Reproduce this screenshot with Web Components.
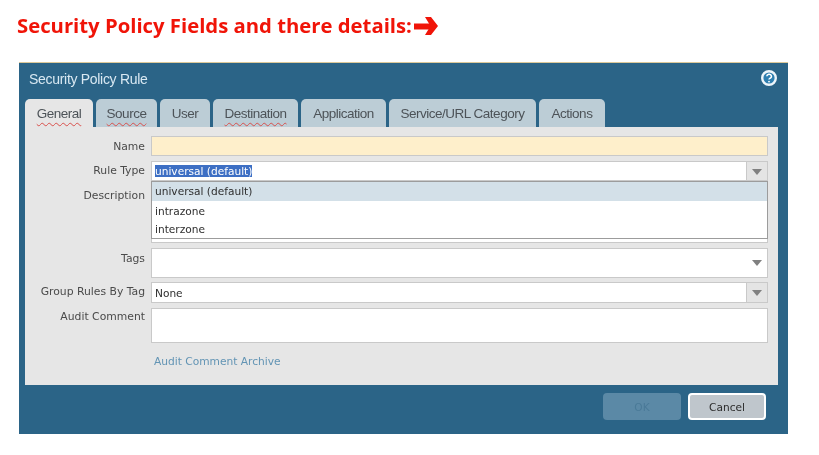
<!DOCTYPE html>
<html>
<head>
<meta charset="utf-8">
<title>Security Policy Rule</title>
<style>
    html, body { margin: 0; padding: 0; background: #fff; }
    body { width: 819px; height: 455px; overflow: hidden; }
</style>
</head>
<body>
<policy-page>
    <policy-heading>Security Policy Fields and there details:</policy-heading>
    <policy-dialog heading="Security Policy Rule">
        <policy-tabs slot="tabs">
            <policy-tab w="68" active spell>General</policy-tab>
            <policy-tab w="61" spell>Source</policy-tab>
            <policy-tab w="50">User</policy-tab>
            <policy-tab w="85" spell>Destination</policy-tab>
            <policy-tab w="85">Application</policy-tab>
            <policy-tab w="147">Service/URL Category</policy-tab>
            <policy-tab w="66">Actions</policy-tab>
        </policy-tabs>
        <form-row label="Name" h="20" nudge="1"><text-box tint h="20"></text-box></form-row>
        <form-row label="Rule Type" h="20">
            <text-box h="20" arrow="button"><span style="background:#3d6fc4;color:#fff">universal (default)</span></text-box>
            <option-menu>
                <option-item selected>universal (default)</option-item>
                <option-item lower>intrazone</option-item>
                <option-item>interzone</option-item>
            </option-menu>
        </form-row>
        <form-row label="Description" h="58" nudge="1"><text-box h="58"></text-box></form-row>
        <form-row label="Tags" h="30" nudge="1"><text-box h="30" arrow="plain"></text-box></form-row>
        <form-row label="Group Rules By Tag" h="21"><text-box h="21" arrow="button" lower>None</text-box></form-row>
        <form-row label="Audit Comment" h="35" nudge="-1"><text-box h="35"></text-box></form-row>
        <form-row label="" h="13"><policy-link>Audit Comment Archive</policy-link></form-row>
        <policy-button slot="footer" disabled>OK</policy-button>
        <policy-button slot="footer" focused>Cancel</policy-button>
    </policy-dialog>
</policy-page>

<script>
class PolicyPage extends HTMLElement {
    constructor() {
        super();
        this.attachShadow({ mode: 'open' });
    }
    connectedCallback() {
        this.shadowRoot.innerHTML = `
            <style>
                :host { display: block; width: 819px; height: 455px; box-sizing: border-box; padding: 12px 31px 0 19px; }
            </style>
            <slot></slot>
        `;
    }
}

class PolicyHeading extends HTMLElement {
    constructor() {
        super();
        this.attachShadow({ mode: 'open' });
    }
    connectedCallback() {
        this.shadowRoot.innerHTML = `
            <style>
                :host { display: flex; align-items: center; height: 26px; margin: 0 0 24px -2px; color: #f01408;
                    font: bold 20.300px "Open Sans", sans-serif; white-space: nowrap; filter: blur(.3px); }
                svg { margin: 1px 0 0 2px; flex: none; }
            </style>
            <slot></slot>
            <svg width="24" height="18" viewBox="0 0 24 18">
                <path d="M0 6.500H18V12.500H0z" fill="#f01408"/>
                <path d="M11 0h6l7 9-7 9h-6l5.500-9z" fill="#f01408"/>
            </svg>
        `;
    }
}

class PolicyDialog extends HTMLElement {
    constructor() {
        super();
        this.attachShadow({ mode: 'open' });
    }
    connectedCallback() {
        this.shadowRoot.innerHTML = `
            <style>
                :host { display: block; width: 769px; height: 372px; box-sizing: border-box; background: #2b6487;
                    border-top: 1px solid #dcc99a; padding: 0 10px 0 6px; filter: blur(.35px); }
                .title { display: flex; justify-content: space-between; height: 36px; padding: 8px 0 0 4px; box-sizing: border-box;
                    color: #d8e8f2; font: 14px "Liberation Sans", sans-serif; letter-spacing: -.3px; line-height: 17px; }
                .help { margin: -2px 0 0 0; }
                .panel { display: flex; flex-direction: column; gap: 4.600px; height: 258px; box-sizing: border-box;
                    background: #e6e6e6; padding: 9px 10px 0 0; }
                .footer { display: flex; justify-content: flex-end; gap: 7px; padding: 8px 12px 0 0; }
            </style>
            <div class="title">
                <span>${this.getAttribute('heading')}</span>
                <svg class="help" width="18" height="18" viewBox="0 0 18 18">
                    <circle cx="9" cy="9" r="6.800" fill="#2f7fb0" stroke="#eef5fa" stroke-width="2.400"/>
                    <path d="M6.800 7.300a2.300 2.100 0 1 1 3.300 1.900c-.8.400-1.100.8-1.100 1.400" fill="none" stroke="#fff" stroke-width="1.500"/>
                    <circle cx="9" cy="12.600" r=".9" fill="#fff"/>
                </svg>
            </div>
            <slot name="tabs"></slot>
            <div class="panel"><slot></slot></div>
            <div class="footer"><slot name="footer"></slot></div>
        `;
    }
}

class PolicyTabs extends HTMLElement {
    constructor() {
        super();
        this.attachShadow({ mode: 'open' });
    }
    connectedCallback() {
        this.shadowRoot.innerHTML = `
            <style>
                :host { display: flex; gap: 3px; height: 28px; }
            </style>
            <slot></slot>
        `;
    }
}

class PolicyTab extends HTMLElement {
    constructor() {
        super();
        this.attachShadow({ mode: 'open' });
    }
    connectedCallback() {
        const active = this.hasAttribute('active');
        const spell = this.hasAttribute('spell');
        this.shadowRoot.innerHTML = `
            <style>
                :host { display: block; box-sizing: border-box; width: ${this.getAttribute('w')}px; height: 28px; overflow: hidden;
                    border-radius: 5px 5px 0 0; background: ${active ? '#e6e6e6' : '#bccdd6'}; color: #4d5358; text-align: center;
                    font: 13.500px/28px "Liberation Sans", sans-serif; letter-spacing: -.5px; }
                span { display: inline-block; line-height: 17px; padding-top: 6px;
                    ${spell ? 'text-decoration: underline wavy #d8504c 1px; text-underline-offset: 4px;' : ''} }
            </style>
            <span><slot></slot></span>
        `;
    }
}

class FormRow extends HTMLElement {
    constructor() {
        super();
        this.attachShadow({ mode: 'open' });
    }
    connectedCallback() {
        const nudge = Number(this.getAttribute('nudge') || 0);
        this.shadowRoot.innerHTML = `
            <style>
                :host { display: flex; position: relative; height: ${this.getAttribute('h')}px; flex: none; }
                label { width: 120px; flex: none; padding-top: ${3 + nudge}px; margin-right: 6px; text-align: right; color: #4a4a4a;
                    font: 10.800px/13px "DejaVu Sans", sans-serif; white-space: nowrap; }
                .field { flex: 1; position: relative; min-width: 0; }
            </style>
            <label>${this.getAttribute('label')}</label>
            <div class="field"><slot></slot></div>
        `;
    }
}

class TextBox extends HTMLElement {
    constructor() {
        super();
        this.attachShadow({ mode: 'open' });
    }
    connectedCallback() {
        const arrow = this.getAttribute('arrow');
        const button = arrow === 'button' ? `
            <div class="btn"><i></i></div>` : arrow === 'plain' ? `<div class="plain"><i></i></div>` : '';
        this.shadowRoot.innerHTML = `
            <style>
                :host { display: flex; box-sizing: border-box; height: ${this.getAttribute('h')}px; border: 1px solid #c9c9c9;
                    background: ${this.hasAttribute('tint') ? '#feefcb' : '#fff'}; color: #2e2e2e;
                    font: 10.600px/13px "DejaVu Sans", sans-serif; }
                .text { flex: 1; padding: ${this.hasAttribute('lower') ? 4 : 3}px 3px 0; white-space: nowrap; }
                .btn { width: 21px; flex: none; display: flex; justify-content: center; padding-top: 7px; box-sizing: border-box;
                    background: #e4e4e4; border-left: 1px solid #c9c9c9; }
                .plain { width: 21px; flex: none; display: flex; justify-content: center; align-items: center; padding-top: 1px; }
                i { display: block; width: 0; height: 0; border: 5.500px solid transparent; border-top: 6px solid #808080; border-bottom: 0; }
            </style>
            <div class="text"><slot></slot></div>${button}
        `;
    }
}

class OptionMenu extends HTMLElement {
    constructor() {
        super();
        this.attachShadow({ mode: 'open' });
    }
    connectedCallback() {
        this.shadowRoot.innerHTML = `
            <style>
                /* drops over the description box */
                :host { position: absolute; z-index: 2; left: 0; right: 0; top: 20px; height: 58px; box-sizing: border-box; display: block;
                    background: #fff; border: 1px solid #9c9c9c; }
            </style>
            <slot></slot>
        `;
    }
}

class OptionItem extends HTMLElement {
    constructor() {
        super();
        this.attachShadow({ mode: 'open' });
    }
    connectedCallback() {
        this.shadowRoot.innerHTML = `
            <style>
                :host { display: block; height: 19px; padding: ${this.hasAttribute('lower') ? 4 : 3}px 3px 0; box-sizing: border-box; color: #2e2e2e;
                    background: ${this.hasAttribute('selected') ? '#d3e0e8' : 'transparent'};
                    font: 10.600px/13px "DejaVu Sans", sans-serif; white-space: nowrap; }
            </style>
            <slot></slot>
        `;
    }
}

class PolicyLink extends HTMLElement {
    constructor() {
        super();
        this.attachShadow({ mode: 'open' });
    }
    connectedCallback() {
        this.shadowRoot.innerHTML = `
            <style>
                :host { display: block; padding: 7px 0 0 3px; color: #6294b4; font: 10.650px/13px "DejaVu Sans", sans-serif;
                    white-space: nowrap; }
            </style>
            <slot></slot>
        `;
    }
}

class PolicyButton extends HTMLElement {
    constructor() {
        super();
        this.attachShadow({ mode: 'open' });
    }
    connectedCallback() {
        const disabled = this.hasAttribute('disabled');
        this.shadowRoot.innerHTML = `
            <style>
                :host { display: flex; align-items: center; justify-content: center; box-sizing: border-box; width: 78px; height: 27px;
                    border-radius: 4px; font: 10.600px "DejaVu Sans", sans-serif;
                    background: ${disabled ? '#5b89a6' : '#bfc6cc'}; color: ${disabled ? '#4a7a98' : '#2c2c2c'};
                    border: ${this.hasAttribute('focused') ? '2px solid #fff' : 'none'}; }
            </style>
            <slot></slot>
        `;
    }
}

customElements.define('policy-page', PolicyPage);
customElements.define('policy-heading', PolicyHeading);
customElements.define('policy-dialog', PolicyDialog);
customElements.define('policy-tabs', PolicyTabs);
customElements.define('policy-tab', PolicyTab);
customElements.define('form-row', FormRow);
customElements.define('text-box', TextBox);
customElements.define('option-menu', OptionMenu);
customElements.define('option-item', OptionItem);
customElements.define('policy-link', PolicyLink);
customElements.define('policy-button', PolicyButton);
</script>
</body>
</html>
